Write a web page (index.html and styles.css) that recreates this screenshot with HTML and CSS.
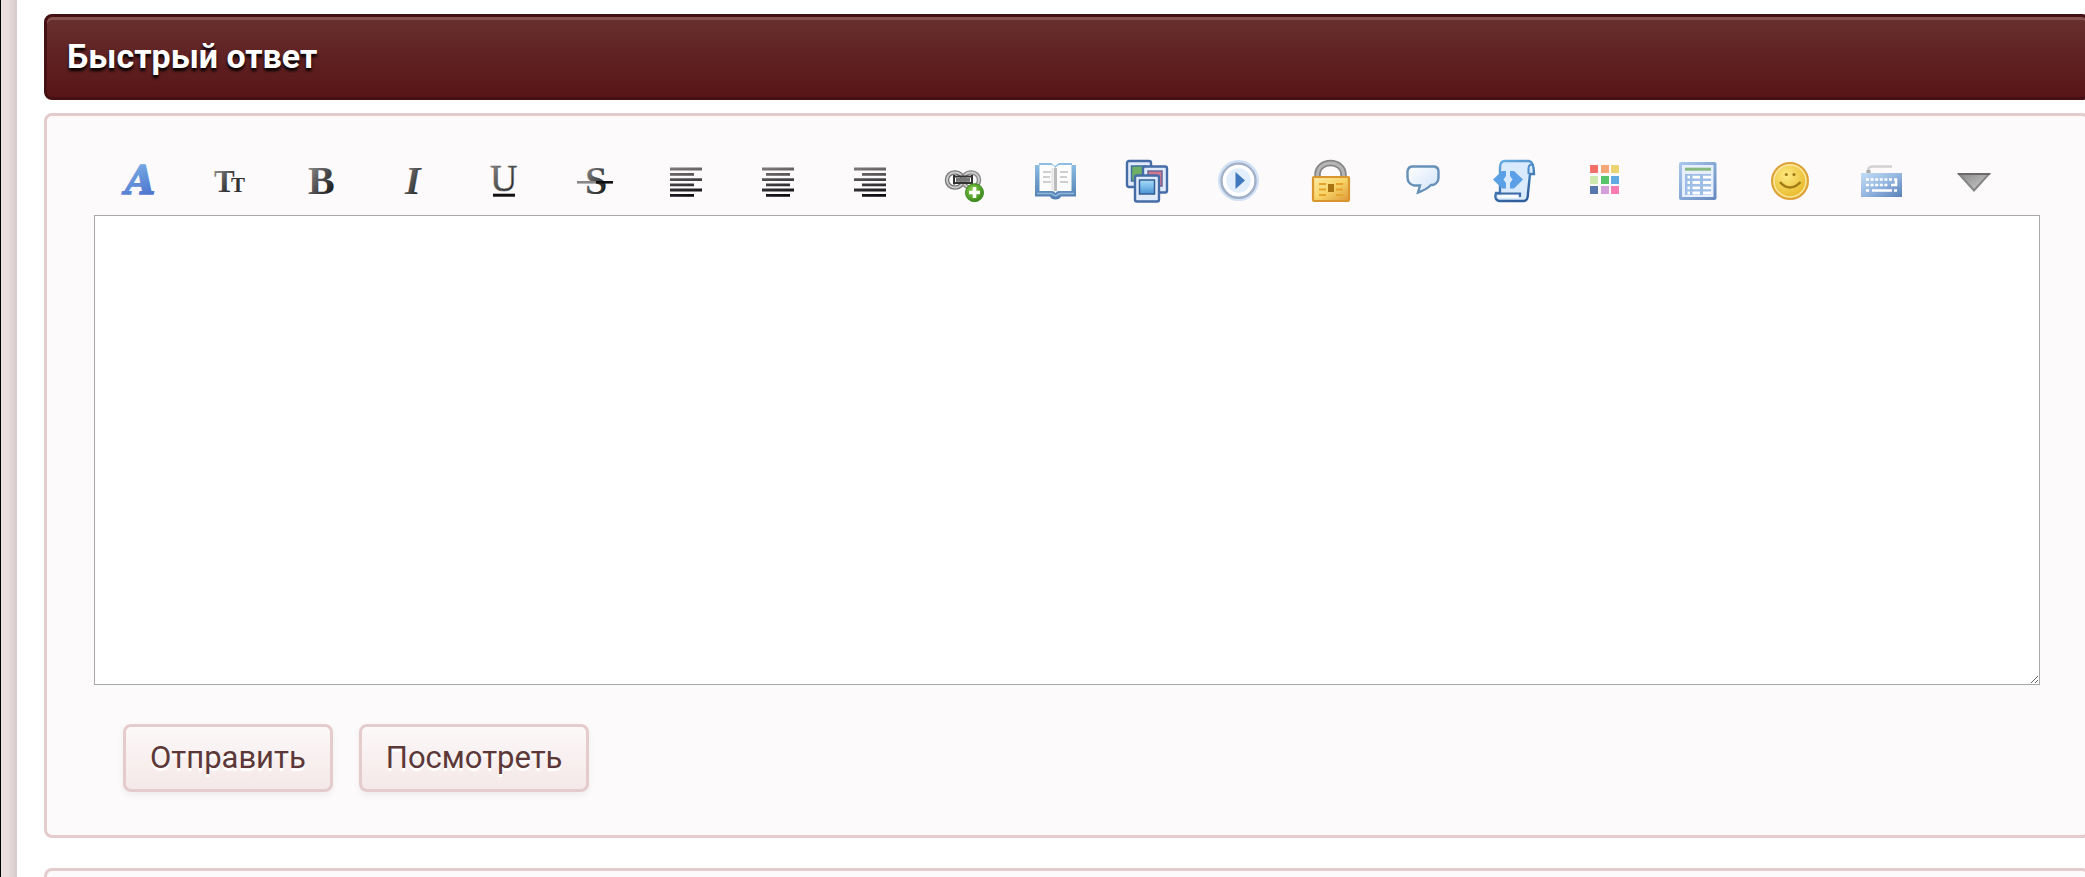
FILE: index.html
```html
<!DOCTYPE html>
<html lang="ru">
<head>
    <meta charset="UTF-8">
    <meta name="viewport" content="width=device-width, initial-scale=1.0">
    <title>Быстрый ответ</title>
    <link rel="stylesheet" href="styles.css">
</head>
<body>

    <!-- shared gradients for the toolbar icons -->
    <svg class="defs" aria-hidden="true">
        <defs>
            <linearGradient id="gBlueA" x1="0" y1="0" x2="0.3" y2="1"><stop offset="0" stop-color="#84c0ea"/><stop offset="1" stop-color="#4f74cf"/></linearGradient>
            <linearGradient id="gDark" x1="0" y1="0" x2="1" y2="1"><stop offset="0.1" stop-color="#8c8c8c"/><stop offset="0.9" stop-color="#111"/></linearGradient>
            <linearGradient id="gLines" gradientUnits="userSpaceOnUse" x1="8" y1="4" x2="14" y2="38"><stop offset="0" stop-color="#8a8486"/><stop offset="1" stop-color="#0c0c10"/></linearGradient>
            <linearGradient id="gBook" x1="0" y1="0" x2="0" y2="1"><stop offset="0" stop-color="#8fc0e4"/><stop offset="1" stop-color="#4f7db0"/></linearGradient>
            <linearGradient id="gSky" x1="0" y1="0" x2="0" y2="1"><stop offset="0" stop-color="#a9dcf6"/><stop offset="0.5" stop-color="#79bbea"/><stop offset="1" stop-color="#4a8fd0"/></linearGradient>
            <linearGradient id="gGold" x1="0" y1="0" x2="1" y2="1"><stop offset="0" stop-color="#fdeaa4"/><stop offset="0.5" stop-color="#f8d468"/><stop offset="1" stop-color="#dd9838"/></linearGradient>
            <linearGradient id="gPale" x1="0" y1="0" x2="1" y2="1"><stop offset="0" stop-color="#fff"/><stop offset="1" stop-color="#cfe2fa"/></linearGradient>
            <linearGradient id="gTable" x1="0" y1="0" x2="1" y2="1"><stop offset="0" stop-color="#a9c9ee"/><stop offset="1" stop-color="#6588bd"/></linearGradient>
            <linearGradient id="gKeys" x1="0" y1="0" x2="1" y2="1"><stop offset="0" stop-color="#c4def6"/><stop offset="0.5" stop-color="#94b6e0"/><stop offset="1" stop-color="#5a80b8"/></linearGradient>
            <linearGradient id="gScroll" x1="0" y1="0" x2="0.4" y2="1"><stop offset="0" stop-color="#68b0e4"/><stop offset="1" stop-color="#2f5f9c"/></linearGradient>
            <linearGradient id="gArrow" x1="0" y1="0" x2="1" y2="1"><stop offset="0" stop-color="#8a8a8a"/><stop offset="1" stop-color="#d0d0d0"/></linearGradient>
            <radialGradient id="gSmile" cx="0.4" cy="0.35" r="0.65"><stop offset="0" stop-color="#fdea82"/><stop offset="1" stop-color="#e8b828"/></radialGradient>
            <radialGradient id="gGreen" cx="0.4" cy="0.35" r="0.65"><stop offset="0" stop-color="#86cf48"/><stop offset="1" stop-color="#3c8a1c"/></radialGradient>
        </defs>
    </svg>

    <div class="wrapper">
        <h2 class="title">Быстрый ответ</h2>

        <form class="box">
            <div class="toolbar">
                <button type="button" class="tool" aria-label="Шрифт">
                    <svg viewBox="0 0 42 42"><text x="8" y="33.500" font-size="39" font-weight="bold" font-style="italic" font-family="DejaVu Serif, serif" fill="url(#gBlueA)" stroke="url(#gBlueA)" stroke-width="1.500">A</text></svg>
                </button>
                <button type="button" class="tool" aria-label="Размер">
                    <svg viewBox="0 0 42 42"><text x="5" y="32" font-size="31" font-weight="bold" fill="url(#gDark)">T</text><text x="22" y="32" font-size="21" font-weight="bold" fill="#333">T</text></svg>
                </button>
                <button type="button" class="tool" aria-label="Жирный">
                    <svg viewBox="0 0 42 42"><text x="8" y="34" font-size="40" font-weight="bold" fill="url(#gDark)">B</text></svg>
                </button>
                <button type="button" class="tool" aria-label="Курсив">
                    <svg viewBox="0 0 42 42"><text x="13" y="34" font-size="40" font-weight="bold" font-style="italic" fill="url(#gDark)">I</text></svg>
                </button>
                <button type="button" class="tool" aria-label="Подчеркнутый">
                    <svg viewBox="0 0 42 42"><text x="6" y="31" font-size="38" fill="url(#gDark)" stroke="#666" stroke-width="0.5">U</text><path d="M9 35.2H31" stroke="#111" stroke-width="3"/></svg>
                </button>
                <button type="button" class="tool" aria-label="Зачеркнутый">
                    <svg viewBox="0 0 42 42"><text x="9" y="34" font-size="40" font-weight="bold" fill="url(#gDark)">S</text><path d="M1 22.3H20" stroke="#888" stroke-width="2.6"/><path d="M20 22.3H37" stroke="#111" stroke-width="2.6"/></svg>
                </button>
                <button type="button" class="tool" aria-label="По левому краю">
                    <svg viewBox="0 0 42 42"><path d="M3 9H35M3 14.3H27M3 19.7H35M3 24.8H27M3 30H35M3 35.3H27" fill="none" stroke="url(#gLines)" stroke-width="2.8"/></svg>
                </button>
                <button type="button" class="tool" aria-label="По центру">
                    <svg viewBox="0 0 42 42"><path d="M3 9H35M7 14.3H31M3 19.7H35M7 24.8H31M3 30H35M7 35.3H31" fill="none" stroke="url(#gLines)" stroke-width="2.8"/></svg>
                </button>
                <button type="button" class="tool" aria-label="По правому краю">
                    <svg viewBox="0 0 42 42"><path d="M3 9H35M11 14.3H35M3 19.7H35M11 24.8H35M3 30H35M11 35.3H35" fill="none" stroke="url(#gLines)" stroke-width="2.8"/></svg>
                </button>
                <button type="button" class="tool" aria-label="Ссылка">
                    <svg viewBox="0 0 42 42">
                        <g fill="none"><rect x="4" y="12.5" width="16" height="15" rx="7.5" stroke="#777" stroke-width="4.5"/><rect x="20" y="12.5" width="16" height="15" rx="7.5" stroke="#888" stroke-width="4.5"/>
                        <rect x="4" y="12.5" width="16" height="15" rx="7.5" stroke="#ccc" stroke-width="1.8"/><rect x="20" y="12.5" width="16" height="15" rx="7.5" stroke="#ccc" stroke-width="1.8"/></g>
                        <path d="M11 16.5H29M11 23H29M11 15V24.5M29 15V24.5" stroke="#333" stroke-width="2"/>
                        <path d="M13 19.8H27" stroke="#777" stroke-width="4"/>
                        <circle cx="31.5" cy="32.7" r="9" fill="url(#gGreen)" stroke="#3d8a22"/>
                        <path d="M31.5 27V38M26 32.5H37" stroke="#fff" stroke-width="3.6"/>
                    </svg>
                </button>
                <button type="button" class="tool" aria-label="Спойлер">
                    <svg viewBox="0 0 42 42">
                        <path d="M0 5H4V3H16L20 6 24 3H37V5H41V36.5H26Q25 39.5 20.5 39.5T15 36.5H0Z" fill="url(#gBook)"/>
                        <path d="M4.5 5H16Q19 5 20.5 8 22 5 25 5H36.5V31H24Q21.5 31 20.5 33 19.5 31 17 31H4.5Z" fill="#fdfdfd"/>
                        <path d="M20.5 8V31" stroke="#bbb" stroke-width="3"/><path d="M17.5 8V30" stroke="#e5e5e5" stroke-width="2"/>
                        <path d="M8 12H16M8 17H15M8 22H16M25 12H33M25 17H32M25 22H33" stroke="#cfcfcf" stroke-width="2"/>
                        <path d="M2 33.5H16L20.5 36 25 33.5H39" fill="none" stroke="#8fb6dc" stroke-width="1.5"/>
                    </svg>
                </button>
                <button type="button" class="tool" aria-label="Изображение">
                    <svg viewBox="0 0 42 42">
                        <g fill="#dfeafa" stroke="#466ca8" stroke-width="2.4">
                            <rect x="1" y="1" width="24" height="26" rx="2"/><rect x="5.5" y="6" width="14" height="15" fill="#6db065" stroke="#3e6da0" stroke-width="1.5"/>
                            <rect x="17" y="6.5" width="24" height="26" rx="2"/><rect x="22" y="11" width="14" height="15" fill="#d3778c" stroke="#6a6596" stroke-width="1.5"/>
                            <rect x="9" y="15.5" width="24" height="26" rx="2"/>
                        </g>
                        <rect x="13.5" y="20" width="15" height="14" fill="url(#gSky)" stroke="#335e96" stroke-width="1.5"/>
                    </svg>
                </button>
                <button type="button" class="tool" aria-label="Видео">
                    <svg viewBox="0 0 42 42">
                        <circle cx="20.5" cy="20.5" r="20.5" fill="#d0e1f6"/>
                        <circle cx="20.5" cy="20.8" r="17" fill="#dce9fa" stroke="#a3b0c6" stroke-width="2.5"/>
                        <circle cx="20.5" cy="20.5" r="14" fill="#e3eefc" stroke="#fff" stroke-width="3.5"/>
                        <path d="M17.5 12V29L27 20.5Z" fill="#3f78bd"/>
                    </svg>
                </button>
                <button type="button" class="tool" aria-label="Скрытый текст">
                    <svg viewBox="0 0 42 42">
                        <path d="M7.5 18V15C7.500 -1 33.500 -1 33.500 15V18" fill="none" stroke="#858585" stroke-width="6.500"/>
                        <path d="M7.500 17V15C7.500 -1 33.500 -1 33.500 15V17" fill="none" stroke="#b5b5b5" stroke-width="3"/>
                        <rect x="3" y="17" width="36" height="24" rx="1" fill="url(#gGold)" stroke="#d9962e" stroke-width="2.200"/>
                        <path d="M9 24H16M9 29.500H16M9 35H16M26 24H33M26 29.500H33M26 35H33" stroke="#e4a42c" stroke-width="2"/>
                        <rect x="18" y="24" width="6" height="8" fill="#ab7412"/>
                    </svg>
                </button>
                <button type="button" class="tool" aria-label="Цитата">
                    <svg viewBox="0 0 42 42"><path d="M10 6.500H32Q36.500 7 36.500 11.500V18Q36 24 30.500 25H29Q24 30 16 32.500L18 25.500H12Q5.500 24 5.500 17V11.500Q6 7 10 6.500Z" fill="url(#gPale)" stroke="#6791b8" stroke-width="2.400"/></svg>
                </button>
                <button type="button" class="tool" aria-label="Код">
                    <svg viewBox="0 0 42 42">
                        <path d="M7 8Q7 1 12 1H36Q41 2 41 14H37L35 33Q35 41 31 41H6Q1 40 3 33H7Z" fill="#d8eafb" stroke="url(#gScroll)" stroke-width="2.400"/>
                        <path d="M35.500 14V8Q36 4 39 5" fill="none" stroke="#4d8ccc" stroke-width="2"/>
                        <path d="M4 33.500H27V37" fill="none" stroke="#3f6ca6" stroke-width="2.200"/><path d="M5 36.500H25" stroke="#fff" stroke-width="2.500"/>
                        <path d="M13 11V16L10.500 19.500 13 23V28.500H9L0 19.500 9 11ZM17 11V16L19.500 19.500 17 23V28.500H21L30 19.500 21 11Z" fill="#5ba0e6"/>
                    </svg>
                </button>
                <button type="button" class="tool" aria-label="Цвет">
                    <svg viewBox="0 0 42 42">
                        <rect x="5" y="5" width="8" height="8" fill="#f27069"/><rect x="16" y="5" width="8" height="8" fill="#f4a878"/><rect x="26" y="5" width="8" height="8" fill="#ecd474"/>
                        <rect x="5" y="16" width="8" height="8" fill="#cfe8b0"/><rect x="16" y="16" width="8" height="8" fill="#57c46c"/><rect x="26" y="16" width="8" height="8" fill="#62abe2"/>
                        <rect x="5" y="26" width="8" height="8" fill="#5877ac"/><rect x="16" y="26" width="8" height="8" fill="#d4a0dc"/><rect x="26" y="26" width="8" height="8" fill="#f47cb0"/>
                    </svg>
                </button>
                <button type="button" class="tool" aria-label="Таблица">
                    <svg viewBox="0 0 42 42">
                        <rect x="2" y="2" width="37.5" height="38" rx="2" fill="url(#gTable)"/>
                        <rect x="5" y="5" width="31.5" height="32" fill="#e6effb"/>
                        <path d="M8 9.2H34" stroke="#86ba80" stroke-width="3"/>
                        <rect x="8" y="14" width="26" height="21" fill="#9dbde6"/>
                        <path d="M10.5 17.2H13M15.5 17.2H23M26 17.2H34M10.5 22.5H13M15.5 22.5H23M26 22.5H34M10.5 27.8H13M15.5 27.8H23M26 27.8H34M10.5 33H13M15.5 33H23M26 33H34" stroke="#fff" stroke-width="2.8"/>
                    </svg>
                </button>
                <button type="button" class="tool" aria-label="Смайлы">
                    <svg viewBox="0 0 42 42">
                        <circle cx="21" cy="21" r="18" fill="url(#gSmile)" stroke="#dda13a" stroke-width="2"/>
                        <circle cx="21" cy="21" r="16" fill="none" stroke="#fbe6a0" stroke-width="1.5"/>
                        <circle cx="17.3" cy="14.5" r="1.6" fill="#a07a18"/><circle cx="25" cy="14.5" r="1.6" fill="#a07a18"/>
                        <path d="M11 22Q15.500 27.500 21 27.500T31.500 22" fill="none" stroke="#a27c14" stroke-width="2.5"/>
                    </svg>
                </button>
                <button type="button" class="tool" aria-label="Клавиатура">
                    <svg viewBox="0 0 42 42">
                        <path d="M8 16V11Q8 6.500 13 6.500H32" fill="none" stroke="#d2d2d2" stroke-width="2.5"/><path d="M8.500 15V10" stroke="#aaa" stroke-width="4"/>
                        <rect x="1" y="13" width="41" height="24" fill="url(#gKeys)"/>
                        <path d="M6 19.500H32M6 25H29M6 30.500H10M34 30.500H37" stroke="#fff" stroke-width="2.6" stroke-dasharray="3 1.6"/>
                        <path d="M12 30.500H32M34 19.500H36V25H31" fill="none" stroke="#fff" stroke-width="2.6"/>
                    </svg>
                </button>
                <button type="button" class="tool" aria-label="Еще">
                    <svg viewBox="0 0 42 42"><path d="M7 14H37L22 30.500Z" fill="url(#gArrow)" stroke="#858585" stroke-width="2"/><path d="M6 14H38" stroke="#6a6a6a" stroke-width="2"/></svg>
                </button>
            </div>

            <textarea class="message" name="message" aria-label="Сообщение"></textarea>

            <div class="buttons">
                <button type="submit" class="btn">Отправить</button>
                <button type="button" class="btn">Посмотреть</button>
            </div>
        </form>

        <div class="box"></div>
    </div>

</body>
</html>
```
FILE: styles.css
```css
*{ box-sizing: border-box; }
html, body{
    margin: 0;
    padding: 0;
    height: 100%;
    overflow: hidden;
}
body{
    padding-left: 16px;
    border-left: 1px solid #000;
    background: linear-gradient(to right, #eee0e0 0, #eadddd 8px, #d8cdcd 16px);
    font-family: Roboto, sans-serif;
}
.defs{
    position: absolute;
    width: 0;
    height: 0;
}
.wrapper{
    min-height: 100%;
    padding: 14px 0 0 27px;
    /* the boxes run a little past the right edge of the window */
    margin-right: -5px;
    background: #fff;
}
.title{
    margin: 0 0 13px;
    padding: 19px 20px 21px;
    border: 3px solid #451013;
    border-radius: 8px;
    background: linear-gradient(#683030, #581416);
    box-shadow: inset 0 3px 0 #86504f;
    color: #fff;
    font-size: 34px;
    line-height: 40px;
    text-shadow: 0 3px 3px #000;
}
.box{
    margin-bottom: 30px;
    padding: 44px 45px 43px;
    border: 3px solid #e5cccc;
    border-radius: 8px;
    background: #fcfafb;
}
.toolbar{
    display: flex;
    padding-right: 23px;
    margin-bottom: 13px;
}
.tool{
    flex: 1;
    display: flex;
    justify-content: center;
    padding: 0;
    border: 0;
    background: none;
    cursor: pointer;
}
.tool svg{
    width: 42px;
    height: 42px;
    overflow: visible;
    font-family: "Liberation Serif", serif;
}
.message{
    display: block;
    width: calc(100% - 4px);
    height: 470px;
    margin: 0 2px;
    padding: 8px;
    border: 1px solid #a9a9a9;
    background: #fff;
    font-family: Roboto, sans-serif;
    font-size: 30px;
}
.buttons{
    display: flex;
    gap: 26px;
    margin: 39px 31px 0;
}
.btn{
    height: 68px;
    padding: 0 24px 2px;
    border: 3px solid #e5cccc;
    border-radius: 8px;
    background: linear-gradient(#fcf8f8, #f5e8e8);
    box-shadow: 0 3px 6px rgba(0, 0, 0, 0.06);
    color: #5c3838;
    font-family: Roboto, sans-serif;
    font-size: 31px;
    text-shadow: 0 3px 0 #fff;
    cursor: pointer;
}
```
